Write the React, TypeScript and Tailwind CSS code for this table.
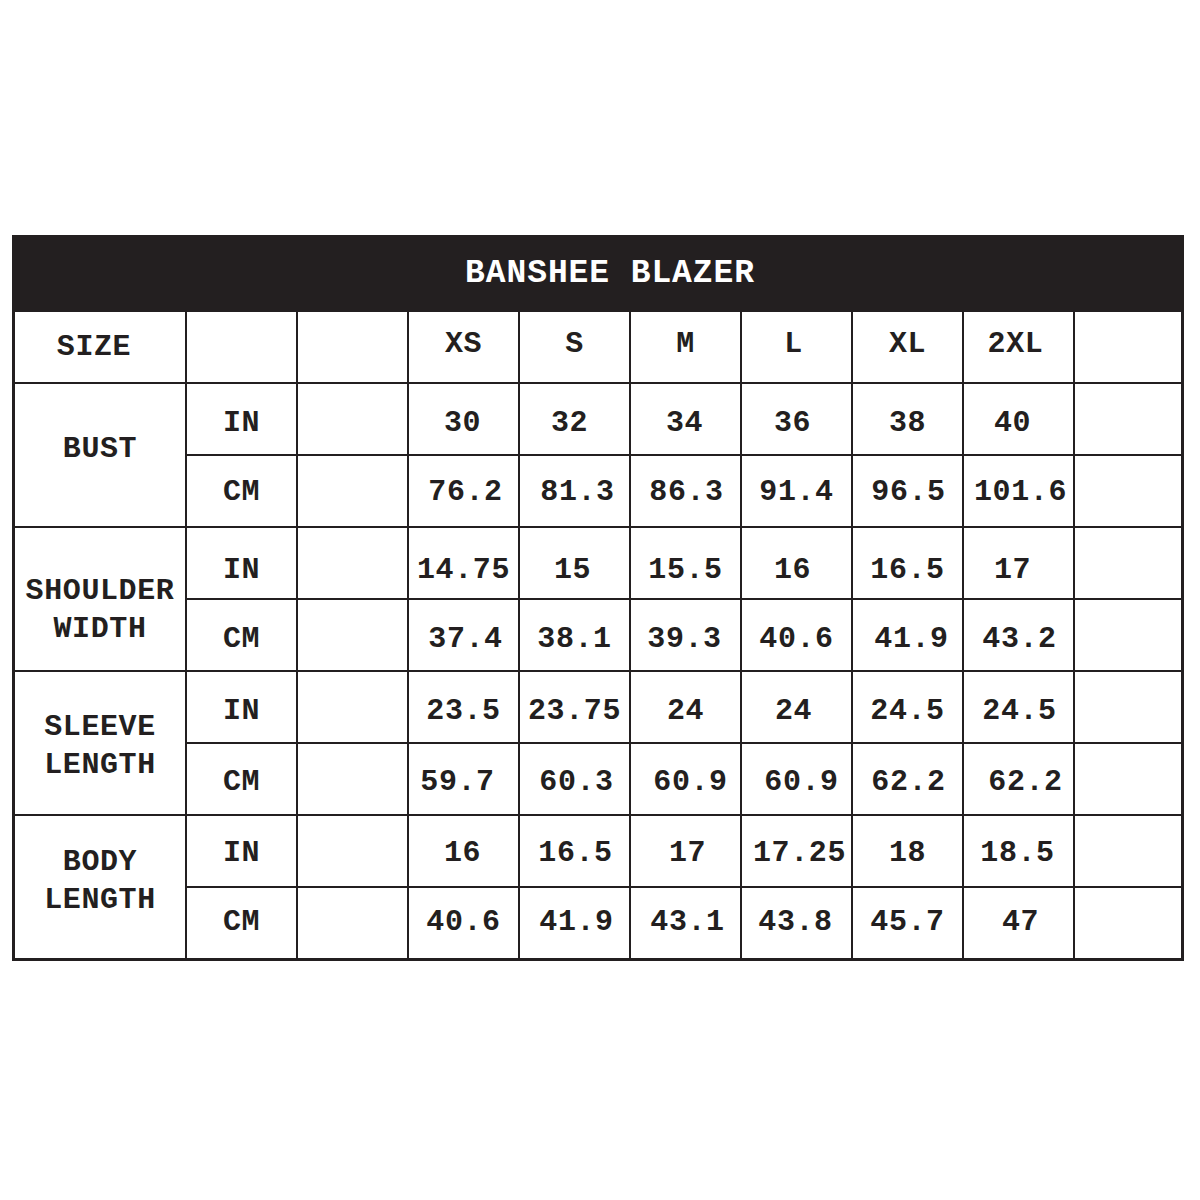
import React from "react";

type Row = { u: string; v: string[]; d: number[]; c: string };
type Group = { label: string[]; lab: string; rows: Row[] };

const sizes = ["XS", "S", "M", "L", "XL", "2XL"];
const sizeD = [0, 0, 0, -3, 0, -3];

const shift: Record<number, string> = {
  [-6]: "pr-[12px]",
  [-5]: "pr-[10px]",
  [-4]: "pr-[8px]",
  [-3]: "pr-[6px]",
  [-2]: "pr-[4px]",
  [-1]: "pr-[2px]",
  0: "",
  1: "pl-[2px]",
  2: "pl-[4px]",
  3: "pl-[6px]",
  4: "pl-[8px]",
  5: "pl-[10px]",
  6: "pl-[12px]",
  7: "pl-[14px]",
};

const groups: Group[] = [
  {
    label: ["BUST"],
    lab: "pb-[12px]",
    rows: [
      { u: "IN", v: ["30", "32", "34", "36", "38", "40"], d: [-1, -5, -1, -4, 0, -6], c: "pt-[8px]" },
      { u: "CM", v: ["76.2", "81.3", "86.3", "91.4", "96.5", "101.6"], d: [2, 3, 1, 0, 1, 2], c: "pt-[2px]" },
    ],
  },
  {
    label: ["SHOULDER", "WIDTH"],
    lab: "pt-[22px]",
    rows: [
      { u: "IN", v: ["14.75", "15", "15.5", "16", "16.5", "17"], d: [0, -2, 0, -4, 0, -6], c: "pt-[14px]" },
      { u: "CM", v: ["37.4", "38.1", "39.3", "40.6", "41.9", "43.2"], d: [2, 0, -1, 0, 4, 1], c: "pt-[8px]" },
    ],
  },
  {
    label: ["SLEEVE", "LENGTH"],
    lab: "pt-[5px]",
    rows: [
      { u: "IN", v: ["23.5", "23.75", "24", "24", "24.5", "24.5"], d: [0, 0, 0, -3, 0, 1], c: "pt-[8px]" },
      { u: "CM", v: ["59.7", "60.3", "60.9", "60.9", "62.2", "62.2"], d: [-6, 2, 5, 5, 1, 7], c: "pt-[7px]" },
    ],
  },
  {
    label: ["BODY", "LENGTH"],
    lab: "pb-[13px]",
    rows: [
      { u: "IN", v: ["16", "16.5", "17", "17.25", "18", "18.5"], d: [-1, 1, 2, 3, 0, -1], c: "pt-[4px]" },
      { u: "CM", v: ["40.6", "41.9", "43.1", "43.8", "45.7", "47"], d: [0, 2, 2, -1, 0, 2], c: "pb-[2px]" },
    ],
  },
];

const cell = "bg-white flex items-center justify-center whitespace-nowrap";

export default function App() {
  return (
    <div
      className="w-[1200px] h-[1200px] bg-white pt-[235px] pl-[12px] text-[#231f20]"
      style={{ fontFamily: '"Liberation Mono", "Courier New", monospace' }}
    >
      <div className="w-[1172px]">
        <div className="h-[77px] bg-[#231f20] flex items-center justify-center pl-[24px] text-white font-bold text-[33px] tracking-[0.9px]">
          BANSHEE BLAZER
        </div>
        <div className="grid grid-cols-[170px_109px_109px_109px_109px_109px_109px_109px_109px_106px] auto-rows-[70px] gap-[2px] bg-[#231f20] px-[3px] pb-[3px] font-bold text-[30px] tracking-[0.6px]">
          <div className={`${cell} pr-[12px]`}>SIZE</div>
          <div className={cell}></div>
          <div className={cell}></div>
          {sizes.map((s, i) => (
            <div key={s} className={`${cell} pb-[5px] ${shift[sizeD[i]]}`}>
              {s}
            </div>
          ))}
          <div className={cell}></div>
          {groups.map((g) => (
            <React.Fragment key={g.label.join("")}>
              <div className={`${cell} row-span-2 flex-col leading-[38px] ${g.lab}`}>
                {g.label.map((l) => (
                  <span key={l}>{l}</span>
                ))}
              </div>
              {g.rows.map((r) => (
                <React.Fragment key={r.u}>
                  <div className={`${cell} ${r.c}`}>{r.u}</div>
                  <div className={cell}></div>
                  {r.v.map((v, i) => (
                    <div key={i} className={`${cell} ${r.c} ${shift[r.d[i]]}`}>
                      {v}
                    </div>
                  ))}
                  <div className={cell}></div>
                </React.Fragment>
              ))}
            </React.Fragment>
          ))}
        </div>
      </div>
    </div>
  );
}
